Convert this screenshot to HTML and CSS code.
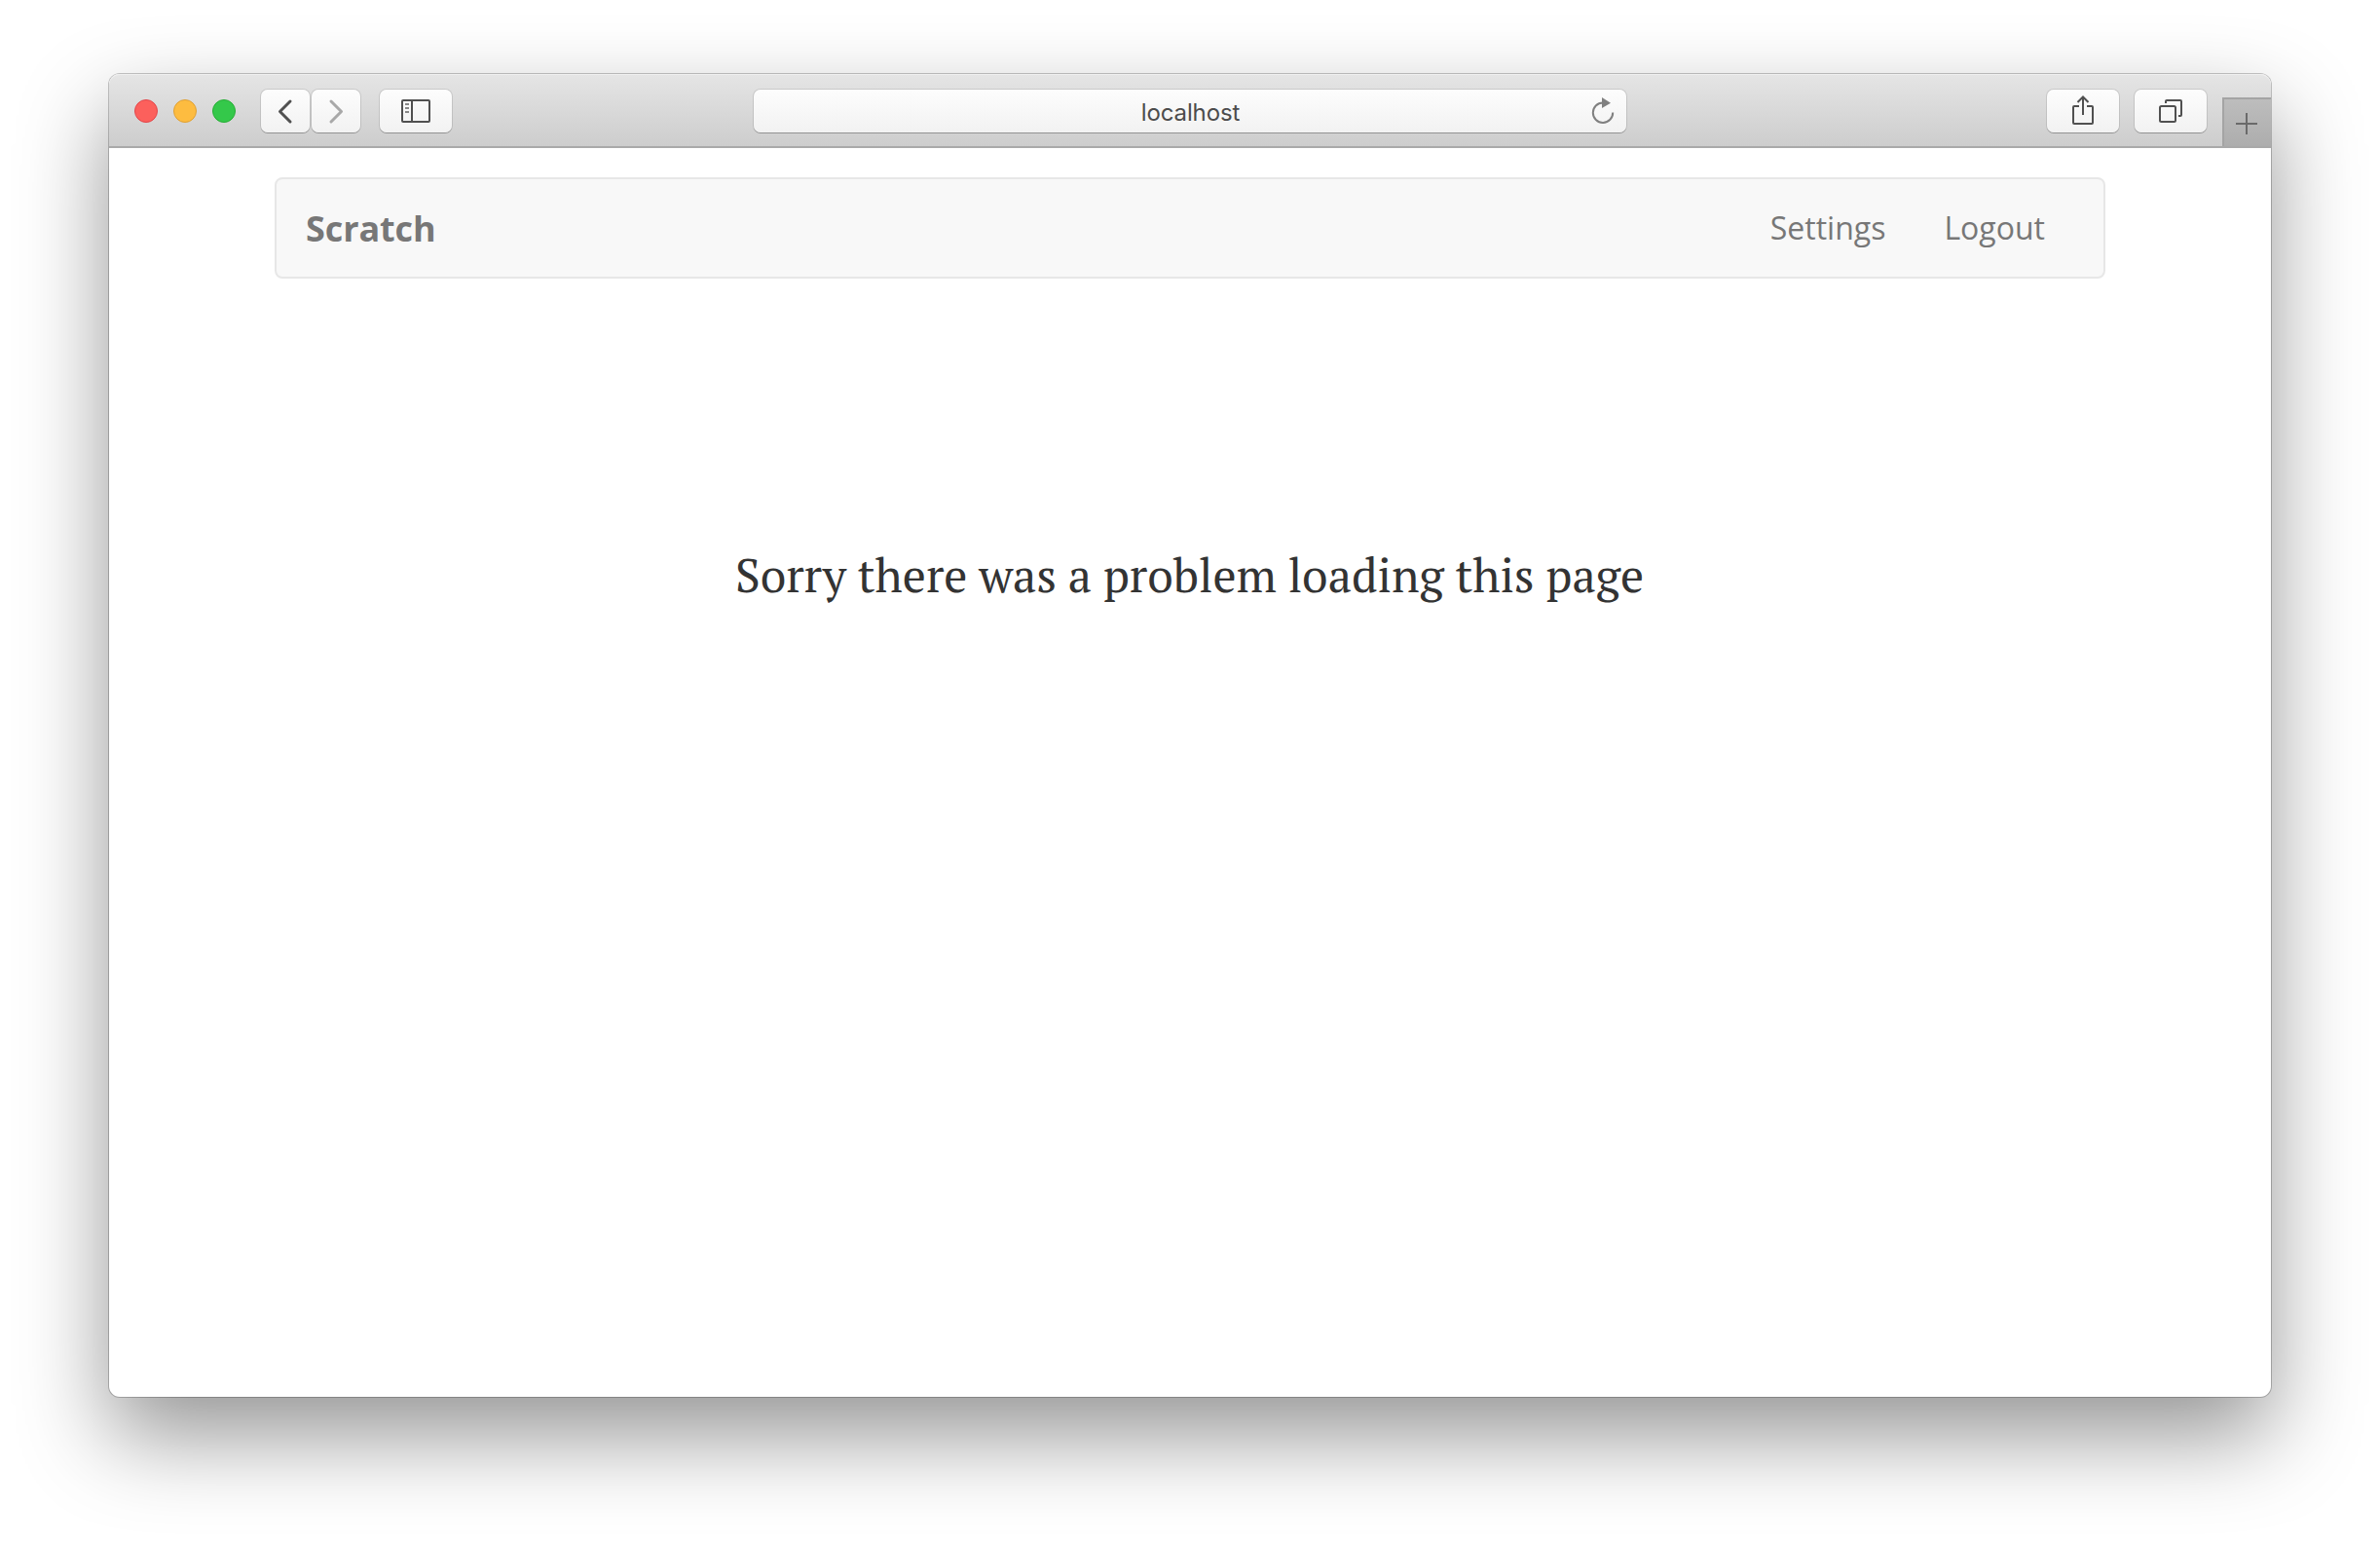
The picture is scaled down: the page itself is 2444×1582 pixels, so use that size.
FILE: index.html
```html
<!DOCTYPE html>
<html lang="en">
<head>
<meta charset="utf-8">
<title>Scratch</title>
<link rel="stylesheet" href="styles.css">
</head>
<body>
<div class="window">
  <header class="toolbar">
    <div class="lights"><span class="light red"></span><span class="light yellow"></span><span class="light green"></span></div>
    <div class="history">
      <button class="button narrow" aria-label="Back"><svg width="50" height="44" fill="none" stroke="#505050" stroke-width="3" stroke-linecap="round" stroke-linejoin="round"><path d="M30 12 19.500 22.500 30 33"/></svg></button>
      <button class="button narrow" aria-label="Forward"><svg width="50" height="44" fill="none" stroke="#a8a8a8" stroke-width="3" stroke-linecap="round" stroke-linejoin="round"><path d="M20 12 30.500 22.500 20 33"/></svg></button>
    </div>
    <button class="button" aria-label="Sidebar"><svg width="74" height="44" fill="none" stroke="#505050" stroke-width="2"><rect x="23" y="11" width="28" height="22" rx="1"/><path d="M33 11v22"/><path stroke="#888" d="M26 15h4M26 19h4M26 23h4"/></svg></button>
    <div class="address"><span class="host">localhost</span>
      <svg class="reload" width="24" height="28" fill="none"><path d="M12 4.500A10.200 10.200 0 1 0 22.200 14.500" stroke="#808080" stroke-width="2"/><path d="M11-1v11l9-5.300z" fill="#808080"/></svg>
    </div>
    <button class="button share" aria-label="Share"><svg width="74" height="44" fill="none" stroke="#505050" stroke-width="2"><path d="M33 17h-5q-1 0-1 1v16q0 1 1 1h18q1 0 1-1v-16q0-1-1-1h-5M37 26V7.500M31.500 13 37 7.500l5.500 5.500"/></svg></button>
    <button class="button" aria-label="Tabs"><svg width="74" height="44" fill="none" stroke="#505050" stroke-width="2"><rect x="26" y="17" width="16" height="16" rx="1.500"/><path d="M32 14v-2q0-1 1-1h14q1 0 1 1v14q0 1-1 1h-2"/></svg></button>
    <button class="new-tab" aria-label="New tab"><svg width="48" height="48" stroke="#6a6a6a" stroke-width="2"><path d="M12 25h22M23 14v22"/></svg></button>
  </header>
  <main class="page">
    <nav class="navbar">
      <a class="brand">Scratch</a>
      <a class="link settings">Settings</a>
      <a class="link logout">Logout</a>
    </nav>
    <h1 class="message">Sorry there was a problem loading this page</h1>
  </main>
</div>
</body>
</html>
```
FILE: styles.css
```css
* { box-sizing: border-box; }
body { margin: 0; padding: 76px 112px 148px; background: #fff; height: 1582px; overflow: hidden; }
.window {
  height: 1358px; border-radius: 11px; background: #fff;
  box-shadow: 0 0 0 1px rgba(0,0,0,.22), 0 40px 92px rgba(0,0,0,.42);
}
.toolbar {
  height: 76px; display: flex; align-items: flex-start; padding: 16px 0 0 26px;
  border-radius: 11px 11px 0 0; border-bottom: 2px solid #a9a9a9;
  background: linear-gradient(#e5e5e5, #cdcdcd); box-shadow: inset 0 1px 0 #f0f0f0;
}
.lights { display: flex; gap: 16px; padding-top: 10px; margin-right: 26px; }
.light { width: 24px; height: 24px; border-radius: 50%; border: 1px solid; }
.red { background: #fc605c; border-color: #e2464a; }
.yellow { background: #fdbc40; border-color: #dea034; }
.green { background: #34c84a; border-color: #27ad35; }
.history { display: flex; gap: 2px; margin-right: 20px; }
.button {
  width: 74px; height: 44px; padding: 0; border: 0; border-radius: 7px; flex: none;
  background: linear-gradient(#fdfdfd, #f2f2f2);
  box-shadow: 0 0 0 1px rgba(0,0,0,.1), 0 1px 0 0 rgba(0,0,0,.22);
}
.narrow { width: 50px; }
.button svg, .new-tab svg { display: block; }
.address {
  width: 896px; height: 44px; margin-left: 310px; border-radius: 7px; flex: none;
  background: linear-gradient(#fdfdfd, #f2f2f2);
  box-shadow: 0 0 0 1px rgba(0,0,0,.1), 0 1px 0 0 rgba(0,0,0,.22);
  display: grid; grid-template-columns: 36px 1fr 36px; align-items: center;
}
.host { grid-column: 2; text-align: center; font: 24px/44px Inter, sans-serif; letter-spacing: -.1px; color: #4c4c4c; padding: 2px 0 0 1px; }
.reload { overflow: visible; }
.share { margin-left: 432px; margin-right: 16px; }
.new-tab {
  width: 50px; height: 50px; margin: 8px 0 0 auto; padding: 0; flex: none;
  border: solid #a4a4a4; border-width: 2px 0 0 2px; border-radius: 0;
  background: linear-gradient(#bdbdbd, #adadad);
}
.page { padding: 30px 170px 0; }
.navbar {
  height: 104px; border: 2px solid #e7e7e7; border-radius: 8px; background: #f8f8f8;
  display: flex; align-items: center; padding: 0 60px 0 30px; color: #777;
  font-family: "Open Sans", sans-serif;
}
.brand { font-size: 36px; font-weight: 700; letter-spacing: -.1px; margin-right: auto; }
.link { font-size: 32px; padding-bottom: 1px; }
.settings { margin-right: 60px; }
.message {
  margin: 264px 0 0; padding-right: 1px; text-align: center; white-space: nowrap; color: #333;
  font: 400 48px/80px "PT Serif", "Liberation Serif", serif;
}
```
